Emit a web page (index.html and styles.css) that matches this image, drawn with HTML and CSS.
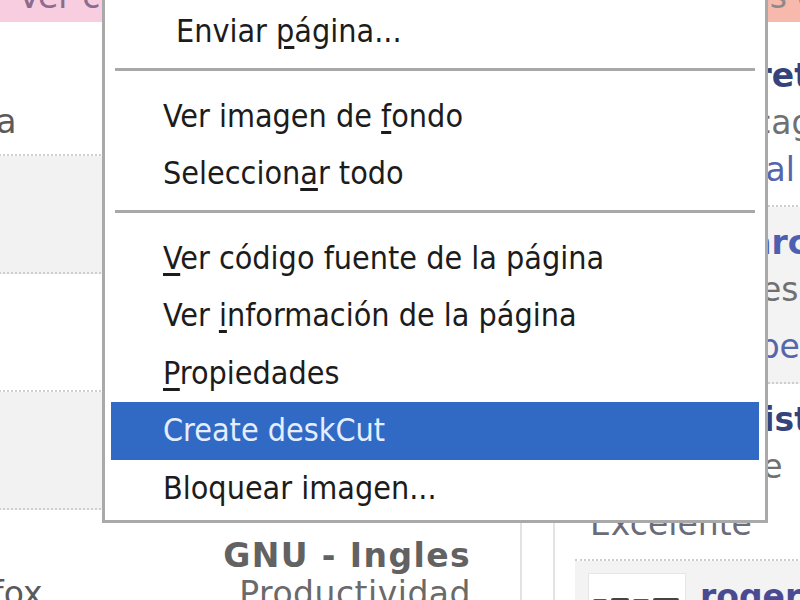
FILE: index.html
```html
<!DOCTYPE html>
<html lang="es">
<head>
    <meta charset="UTF-8">
    <title>Software libre - comentarios</title>
    <link rel="stylesheet" href="styles.css">
</head>
<body>
    <div class="page">
        <div class="main">
            <div class="tab-strip"><span>Ver comentarios</span></div>

            <div class="row row-first">
                <div class="row-name">Herramienta</div>
                <div class="row-meta"><b>GNU - Ingles</b><br>Gráficos</div>
            </div>
            <div class="row row-alt">
                <div class="row-name">Correo</div>
                <div class="row-meta"><b>MPL - Español</b><br>Internet</div>
            </div>
            <div class="row">
                <div class="row-name">Editor</div>
                <div class="row-meta"><b>GPL - Español</b><br>Multimedia</div>
            </div>
            <div class="row row-alt">
                <div class="row-name">Compresor</div>
                <div class="row-meta"><b>LGPL - Ingles</b><br>Utilidades</div>
            </div>
            <div class="row">
                <div class="row-name">Mozilla Firefox</div>
                <div class="row-meta"><b>GNU - Ingles</b><br>Productividad</div>
            </div>
        </div>

        <div class="gutter"></div>

        <aside class="side">
            <div class="side-strip"><span>Comentarios de los usuarios</span></div>

            <div class="side-list">
                <div class="review">
                    <div class="avatar"></div>
                    <div class="review-info">
                        <a class="review-name">Moret</a>
                        <span class="review-place">Chicago</span>
                        <a class="review-link">Portal</a>
                    </div>
                </div>
                <div class="review review-alt">
                    <div class="avatar"></div>
                    <div class="review-info">
                        <a class="review-name review-name-light">Abarca</a>
                        <span class="review-place">Mi reseña</span>
                    </div>
                    <a class="review-comment review-comment-link">Funciona, pero lento</a>
                </div>
                <div class="review">
                    <div class="avatar"></div>
                    <div class="review-info">
                        <a class="review-name">Batista</a>
                        <span class="review-place">Chile</span>
                    </div>
                    <p class="review-comment">Excelente</p>
                </div>
                <div class="review review-alt">
                    <div class="avatar">
                        <svg width="98" height="90" viewBox="0 0 98 90">
                            <rect x="4" y="25" width="14" height="5" rx="2" fill="#555"/>
                            <rect x="22" y="24" width="18" height="6" rx="2" fill="#444"/>
                            <rect x="44" y="25" width="16" height="5" rx="2" fill="#555"/>
                            <rect x="64" y="24" width="26" height="6" rx="2" fill="#444"/>
                        </svg>
                    </div>
                    <div class="review-info">
                        <a class="review-name review-name-dark">roger</a>
                        <span class="review-place">Argentina</span>
                    </div>
                </div>
            </div>
        </aside>
    </div>

    <div class="menu">
        <div class="menu-item menu-item-send">Enviar <u>p</u>ágina...</div>
        <div class="menu-sep"></div>
        <div class="menu-item">Ver imagen de <u>f</u>ondo</div>
        <div class="menu-item">Seleccion<u>a</u>r todo</div>
        <div class="menu-sep"></div>
        <div class="menu-item"><u>V</u>er código fuente de la página</div>
        <div class="menu-item">Ver <u>i</u>nformación de la página</div>
        <div class="menu-item"><u>P</u>ropiedades</div>
        <div class="menu-item menu-item-active">Create deskCut</div>
        <div class="menu-item">Bloquear imagen...</div>
    </div>
</body>
</html>
```

FILE: styles.css
```css
* {
    box-sizing: border-box;
}
html, body {
    margin: 0;
    height: 100%;
    overflow: hidden;
}
body {
    position: relative;
    width: 800px;
    height: 600px;
    background: #fff;
    font-family: "DejaVu Sans", Verdana, sans-serif;
    font-size: 33px;
    color: #6a6a6a;
}
a {
    text-decoration: none;
}

.page {
    display: flex;
    height: 600px;
}

/* lista de programas (desplazada a la izquierda) */
.main {
    flex: none;
    width: 722px;
    margin-left: -200px;
    border-right: 2px solid #e2e2e2;
}
.tab-strip {
    height: 22px;
    overflow: hidden;
    background: #f7cddf;
    padding-left: 218px;
    color: #8c6c8e;
    white-space: nowrap;
}
.tab-strip span {
    display: block;
    line-height: 38px;
    margin-top: -22px;
}
.row {
    display: flex;
    align-items: flex-end;
    height: 118px;
    padding: 0 49px 13px 9px;
    border-bottom: 2px dotted #cfcfcf;
    line-height: 38px;
    white-space: nowrap;
}
.row-first {
    height: 134px;
}
.row-alt {
    background: #f2f2f2;
}
.row-name {
    color: #5a5a5a;
}
.row-meta {
    margin-left: auto;
    text-align: right;
    letter-spacing: 0.5px;
}
.row-meta b {
    color: #626262;
    letter-spacing: 1.4px;
}

.gutter {
    flex: none;
    width: 31px;
}

/* columna de comentarios */
.side {
    flex: 1;
    border-left: 2px solid #e4e4e4;
    padding-left: 20px;
    white-space: nowrap;
}
.side-strip {
    height: 22px;
    overflow: hidden;
    background: #f8b9ad;
    margin-left: -22px;
    padding-left: 24px;
    color: #8a8a8a;
}
.side-strip span {
    display: block;
    line-height: 38px;
    margin-top: -22px;
}
.side-list {
    padding-top: 18px;
}
.review {
    display: grid;
    grid-template-columns: 98px 1fr;
    column-gap: 14px;
    align-items: start;
    padding: 12px 0 12px 13px;
    border-bottom: 2px dotted #cdcdcd;
}
.review-alt {
    background: #f3f3f3;
}
.avatar {
    width: 98px;
    height: 90px;
    background: #fff;
    border: 1px solid #e6e6e6;
}
.avatar svg {
    display: block;
}
.review-info {
    display: flex;
    flex-direction: column;
    line-height: 47px;
}
.review-name {
    font-weight: bold;
    color: #34437c;
}
.review-name-light {
    color: #4d5fae;
}
.review-name-dark {
    color: #4a4a92;
}
.review-place {
    color: #707070;
}
.review-link {
    color: #5566aa;
}
.review-comment {
    grid-column: 1 / -1;
    margin: 10px 0 0 2px;
    line-height: 47px;
    color: #6a6c7a;
}
.review-comment-link {
    color: #5566aa;
}

/* menú contextual */
.menu {
    position: absolute;
    left: 102px;
    top: -3px;
    width: 666px;
    padding: 3px 6px;
    background: #fff;
    border: 3px solid #a9a9a9;
    font-family: "DejaVu Sans Condensed", "DejaVu Sans", sans-serif;
    font-stretch: condensed;
    font-size: 32px;
    color: #1c1c1c;
}
.menu-item {
    line-height: 57.5px;
    height: 57.5px;
    padding-left: 52px;
    white-space: nowrap;
}
.menu-item u {
    text-decoration-thickness: 3px;
    text-underline-offset: 4px;
}
.menu-item-send {
    padding-left: 65px;
}
.menu-item-active {
    background: #316ac5;
    color: #e4eeff;
}
.menu-sep {
    height: 27px;
    padding: 7px 4px 0;
}
.menu-sep::before {
    content: "";
    display: block;
    height: 3px;
    background: #a8a8a8;
}
```
